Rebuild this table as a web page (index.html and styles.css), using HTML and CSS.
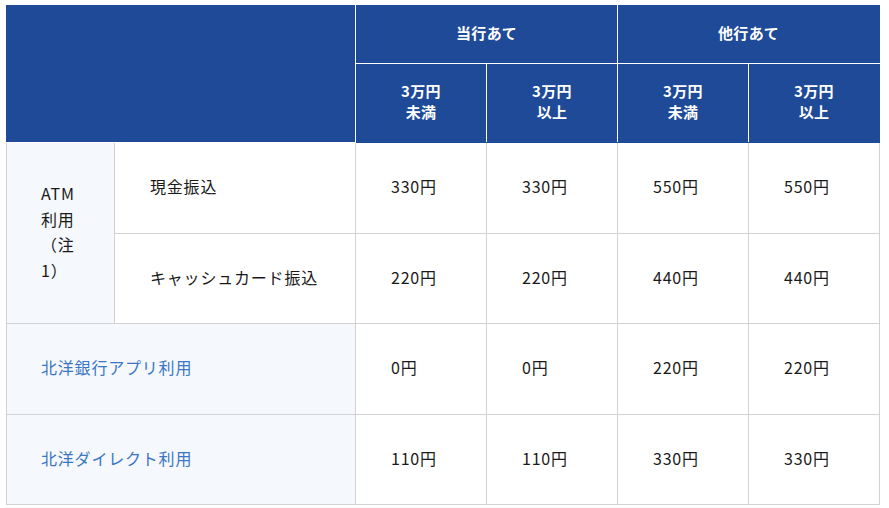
FILE: index.html
```html
<!DOCTYPE html>
<html lang="ja">
<head>
<meta charset="utf-8">
<link rel="stylesheet" href="styles.css">
</head>
<body>
<table class="fee-table">
  <colgroup>
    <col class="c-group">
    <col class="c-sub">
    <col class="c-data">
    <col class="c-data">
    <col class="c-data">
    <col class="c-data">
  </colgroup>
  <thead>
    <tr>
      <th class="h-blank" colspan="2" rowspan="2"></th>
      <th colspan="2">当行あて</th>
      <th colspan="2">他行あて</th>
    </tr>
    <tr>
      <th>3万円<br>未満</th>
      <th>3万円<br>以上</th>
      <th>3万円<br>未満</th>
      <th>3万円<br>以上</th>
    </tr>
  </thead>
  <tbody>
    <tr>
      <th class="row-head" rowspan="2">ATM利用（注1）</th>
      <td class="sub-head">現金振込</td>
      <td>330円</td>
      <td>330円</td>
      <td>550円</td>
      <td>550円</td>
    </tr>
    <tr>
      <td class="sub-head">キャッシュカード振込</td>
      <td>220円</td>
      <td>220円</td>
      <td>440円</td>
      <td>440円</td>
    </tr>
    <tr>
      <th class="row-head link" colspan="2">北洋銀行アプリ利用</th>
      <td>0円</td>
      <td>0円</td>
      <td>220円</td>
      <td>220円</td>
    </tr>
    <tr>
      <th class="row-head link" colspan="2">北洋ダイレクト利用</th>
      <td>110円</td>
      <td>110円</td>
      <td>330円</td>
      <td>330円</td>
    </tr>
  </tbody>
</table>
</body>
</html>
```

FILE: styles.css
```css
html, body {
  margin: 0;
  padding: 0;
  background: #ffffff;
}

body {
  padding: 5px 0 0 6px;
  font-family: "Noto Sans CJK JP", "Noto Sans", sans-serif;
  color: #1a1a1a;
}

.fee-table {
  border-collapse: collapse;
  table-layout: fixed;
  width: 874px;
}

.c-group { width: 108px; }
.c-sub { width: 241px; }
.c-data { width: 131px; }

.fee-table thead th {
  background: #1f4a98;
  color: #ffffff;
  font-size: 15px;
  font-weight: 700;
  line-height: 21px;
  letter-spacing: 0.02em;
  padding: 16px 4px 20px;
  text-align: center;
  vertical-align: middle;
  border: 1px solid #ffffff;
}

.fee-table thead tr:first-child th {
  border-top-color: #1f4a98;
}

.fee-table thead th.h-blank {
  border-left-color: #1f4a98;
}

.fee-table thead tr th:last-child {
  border-right-color: #1f4a98;
}

.fee-table thead tr:last-child th {
  border-bottom-color: #1f4a98;
}

.fee-table tbody th,
.fee-table tbody td {
  font-size: 16px;
  font-weight: 400;
  line-height: 25.6px;
  text-align: left;
  vertical-align: middle;
  padding: 31px 34px 33px 35px;
  border: 1px solid #d2d2d2;
  letter-spacing: 0.05em;
}

.fee-table tbody td {
  padding-left: 35px;
  background: #ffffff;
}

.fee-table tbody .row-head {
  background: #f5f8fc;
  padding-left: 34px;
  padding-right: 34px;
}

.fee-table tbody .link {
  color: #3b76c4;
}
```
